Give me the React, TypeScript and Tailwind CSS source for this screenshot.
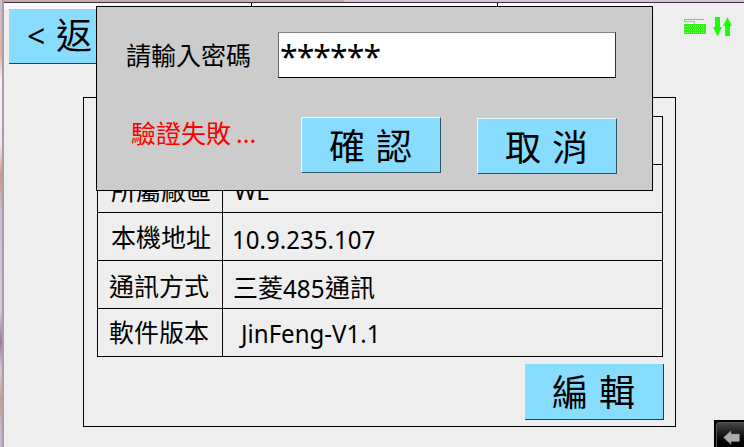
import React from 'react';

const rows = [
  { label: '', value: '', l: '', v: '' },
  { label: '所屬廠區', value: 'WL', l: 'pl-[13px] pt-[3px]', v: 'pl-[11px] pt-[3px]' },
  { label: '本機地址', value: '10.9.235.107', l: 'pl-[13px] pt-[2px]', v: 'pl-[9px] pt-[4px]' },
  { label: '通訊方式', value: '三菱485通訊', l: 'pl-[11px] pt-[4px]', v: 'pl-[10px] pt-[6px]' },
  { label: '軟件版本', value: 'JinFeng-V1.1', l: 'pl-[11px] pt-0', v: 'pl-[18px] pt-0' },
];

function Value({ text }: { text: string }) {
  if (text.startsWith('三')) {
    return (
      <span className="flex items-center">
        <span>三菱</span>
        <span className="w-[42px]"><span className="inline-block origin-left scale-x-[.93] text-[26px]">485</span></span>
        <span>通訊</span>
      </span>
    );
  }
  return <span className="origin-left scale-x-[.925] text-[26px]">{text}</span>;
}

function KeyboardIcon() {
  return (
    <svg className="mt-[18px] h-[17px] w-[22px]" viewBox="0 0 22 17" fill="none" shapeRendering="crispEdges">
      <path d="M1 1.5H20M0.5 1V4" stroke="#55e83d" />
      <path d="M1 3.5H10.5V6" stroke="#9ccf92" />
      <path d="M0 6H22V16H0Z" fill="#35ef18" />
      <path d="M1 8.5H21M1 11.5H21M1 14.5H21" stroke="#a1f391" strokeDasharray="1 1" />
    </svg>
  );
}

function TransferIcon() {
  return (
    <svg className="mt-[17px] ml-[7px] h-[20px] w-[20px]" viewBox="0 0 20 20" fill="#1cff00">
      <path d="M2 0H7V10H9L4.5 19.5L0 10H2Z" />
      <path d="M14.5 0L19 9H17V19H12V9H10Z" />
    </svg>
  );
}

export default function App() {
  return (
    <div className="relative flex h-[447px] w-[744px] overflow-hidden bg-[#eeeeee] text-[25px] leading-none whitespace-pre text-black [font-family:'Noto_Sans','Noto_Sans_CJK_TC',sans-serif]">
      <div className="w-[4px] shrink-0 border-r-2 border-[#ad9dac] bg-[linear-gradient(#cabdd0_0px,#e2b49b_55px,#f5f0f5_80px,#efe8f0_145px,#cf967f_175px,#c9bdd0_210px,#d5cada_310px,#9c7b9c_342px,#d4c8d7_370px,#c99b87_400px,#c5b9cc_430px)]" />
      <div className="flex w-[740px] flex-col">
        <div className="flex h-[2px] shrink-0">
          <div className="w-[340px] bg-[#c8aba6]" />
          <div className="grow bg-[#d0c5d0]" />
        </div>
        <div className="flex h-[7px] shrink-0 border-t border-[#39313b]">
          <div className="w-[248px] border-r border-black bg-white/70" />
          <div className="w-[246px] border-r border-black bg-white/70" />
          <div className="w-[155px] bg-white/70" />
        </div>
        <div className="flex h-[55px] shrink-0 items-center border-b border-[#24414d] bg-[#88ddff] pb-0 pl-[18px] ml-[5px] w-[120px] text-[36px]">
          <span className="w-[29px] text-[32px]">&lt;</span>
          <span>返</span>
        </div>
        <div className="mt-[33px] ml-[79px] flex h-[330px] w-[593px] flex-col border border-black pt-[18px] pl-[13px]">
          <div className="flex h-[241px] w-[566px] flex-col border-t border-l border-black">
            {rows.map((row, i) => (
              <div key={i} className="flex h-[48px] shrink-0 border-r border-b border-black">
                <div className={`flex w-[125px] shrink-0 items-center border-r border-black ${row.l}`}>{row.label}</div>
                <div className={`flex items-center ${row.v}`}><Value text={row.value} /></div>
              </div>
            ))}
          </div>
          <div className="mt-[7px] ml-[428px] flex h-[56px] w-[139px] items-center border-r border-b border-[#263e48] bg-[#88ddff] pt-[3px] pl-[27px] text-[36px]">
            <span className="flex gap-[11px]"><span>編</span><span>輯</span></span>
          </div>
        </div>
      </div>

      <div className="absolute top-0 right-0 flex h-[40px] w-[60px]">
        <KeyboardIcon />
        <TransferIcon />
      </div>

      <div className="absolute top-[6px] left-[96px] flex h-[185px] w-[557px] flex-col border border-black bg-[#cccccc]">
        <div className="flex h-[110px] shrink-0">
          <div className="w-[181px] pt-[36px] pl-[29px]">請輸入密碼</div>
          <div className="mt-[25px] flex h-[46px] w-[338px] border border-t-[#808080] border-l-[#666666] border-r-[#333] border-b-black bg-white pt-[9px] pl-[1px] text-[32px] leading-[30px] tracking-[-0.95px]">******</div>
        </div>
        <div className="flex">
          <div className="flex w-[204px] pt-[4px] pl-[34px] text-[#ff0000]">
            <span>驗證失敗</span><span className="pl-[5px]">...</span>
          </div>
          <button className="flex h-[56px] w-[140px] items-center gap-[11px] border border-[#eaf9ff] border-r-[#2e5565] border-b-[#2e5565] bg-[#88ddff] pt-[3px] pl-[27px] text-[36px]">
            <span>確</span><span>認</span>
          </button>
          <button className="mt-px ml-[36px] flex h-[56px] w-[140px] items-center gap-[11px] border border-[#eaf9ff] border-r-[#2e5565] border-b-[#2e5565] bg-[#88ddff] pt-[3px] pl-[27px] text-[36px]">
            <span>取</span><span>消</span>
          </button>
        </div>
      </div>

      <div className="absolute top-[420px] left-[714px] h-[27px] w-[30px] border-t border-l border-black bg-black pt-px pl-px">
        <div className="flex h-[26px] w-[29px] items-center justify-center rounded-tl-[3px] border-t border-l border-[#555] bg-linear-to-b from-[#454545] to-black">
          <svg className="mb-[-3px] h-[15px] w-[17px]" viewBox="0 0 17 15"><path d="M.5 7.5L8 .8V4H16.5V11.5H8V14.5Z" fill="#acacac" stroke="#777" strokeWidth=".5" /></svg>
        </div>
      </div>
    </div>
  );
}
